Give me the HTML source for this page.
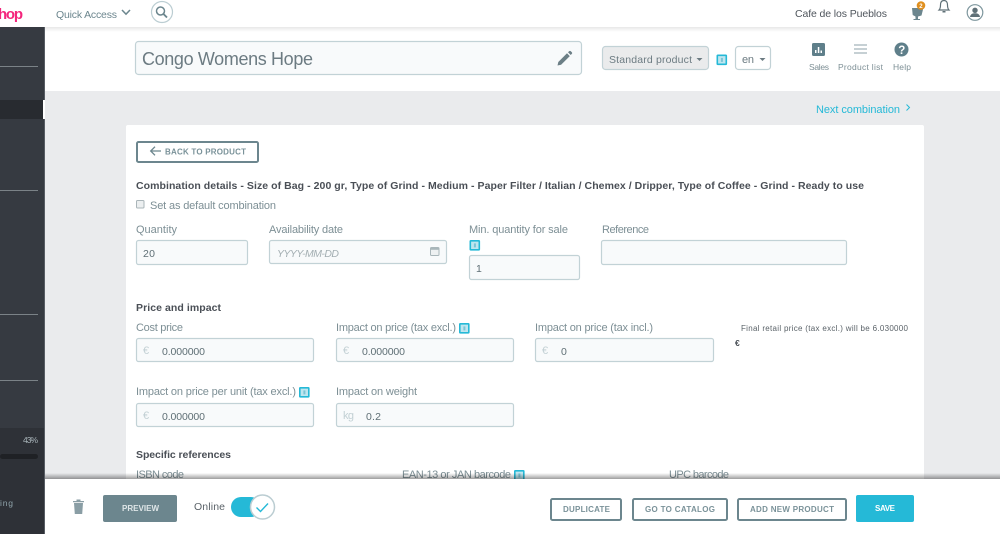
<!DOCTYPE html>
<html lang="en"><head><meta charset="utf-8"><title>Congo Womens Hope</title>
<style>
html,body{margin:0;padding:0;width:1000px;height:534px;overflow:hidden;background:#fff}
svg{display:block;filter:blur(.35px)}
text{font-family:"Liberation Sans",sans-serif;font-size:11px;fill:#7d8f95;white-space:pre}
.b{font-weight:bold;fill:#4a4f56;font-size:10.500px}
.v{fill:#5f6f75;font-size:10.500px}
.c{fill:#25b9d7}
.btn{font-weight:bold;font-size:8px;fill:#7a9299}
.in{fill:#f8fafb;stroke:#c2d2d6;stroke-width:1.200}
.o{fill:#fff;stroke:#6c868e;stroke-width:2}
.pre{fill:#c2d0d4}
</style></head><body>
<svg width="1000" height="534" viewBox="0 0 1000 534" xmlns="http://www.w3.org/2000/svg">
<defs>
<linearGradient id="sh" x1="0" y1="0" x2="0" y2="1"><stop offset="0" stop-color="#000" stop-opacity="0"/><stop offset="1" stop-color="#000" stop-opacity=".38"/></linearGradient>
<linearGradient id="sh2" x1="0" y1="0" x2="0" y2="1"><stop offset="0" stop-color="#000" stop-opacity=".09"/><stop offset="1" stop-color="#000" stop-opacity="0"/></linearGradient>
<g id="h"><rect x=".8" y=".8" width="9" height="9" fill="#bfe6ef" stroke="#25b9d7" stroke-width="1.600" rx=".5"/><rect x="4.400" y="3.400" width="2" height="4" fill="#7cc3d5"/></g>
</defs>

<!-- page backgrounds -->
<rect x="45" y="27" width="955" height="64" fill="#fff"/>
<rect x="45" y="91" width="955" height="388" fill="#eaebed"/>
<rect x="126" y="125" width="798" height="370" rx="2" fill="#fff"/>

<!-- top bar -->
<rect x="0" y="0" width="1000" height="27" fill="#fff"/>
<rect x="45" y="27" width="955" height="5" fill="url(#sh2)"/>
<text x="-2" y="19" textLength="25" style="font-size:15px;font-weight:bold;fill:#f4257c">hop</text>
<text x="56" y="18" textLength="61" style="fill:#6c868e;font-size:10.500px">Quick Access</text>
<path d="M122 10l4 4.200 4-4.200" fill="none" stroke="#6c868e" stroke-width="1.500"/>
<circle cx="162" cy="12" r="10.500" fill="#fff" stroke="#bbcdd2" stroke-width="1.200"/>
<circle cx="160.500" cy="11" r="4" fill="none" stroke="#6c868e" stroke-width="1.500"/>
<path d="M163.500 14l3.500 3.500" stroke="#6c868e" stroke-width="1.900"/>
<text x="795" y="17" textLength="92" style="fill:#4f555c;font-size:10.500px">Cafe de los Pueblos</text>
<!-- notifications -->
<path d="M912 8h7l.8 1.500 3.200 0-1.500 6-3.500 1v2.500h2v1h-6.500v-1h2V16.500l-2.800-1.500z" fill="#6c868e"/>
<circle cx="921" cy="5.500" r="4.300" fill="#e08f1e"/><text x="919.300" y="8" style="font-size:6px;font-weight:bold;fill:#fff">2</text>
<path d="M944 .5c-2.500 0-3.500 2-3.500 4.500 0 2.500-.5 4-1.500 5h10c-1-1-1.500-2.500-1.500-5 0-2.500-1-4.500-3.500-4.500z" fill="#fff" stroke="#5f7077" stroke-width="1.200"/>
<rect x="942.500" y="11" width="3" height="1.500" fill="#5f7077"/>
<circle cx="975" cy="12.500" r="7.800" fill="#fff" stroke="#7d969d" stroke-width="1.200"/>
<circle cx="975" cy="10.300" r="2.700" fill="#5f7077"/><path d="M970 17c.5-3 2.500-3.700 5-3.700s4.500.7 5 3.700z" fill="#5f7077"/>

<!-- sidebar -->
<rect x="0" y="27" width="45" height="507" fill="#363a41"/>
<rect x="44" y="27" width="1" height="507" fill="#585d64"/>
<rect x="0" y="428" width="44" height="106" fill="#2e3137"/>
<rect x="0" y="100" width="43" height="19" fill="#282b30"/>
<rect x="43" y="100" width="2" height="19" fill="#fff"/>
<rect x="0" y="66" width="38" height="1" fill="#7b8287"/>
<rect x="0" y="190" width="38" height="1" fill="#7b8287"/>
<rect x="0" y="314" width="38" height="1" fill="#7b8287"/>
<rect x="0" y="380" width="38" height="1" fill="#7b8287"/>
<text x="23" y="443" textLength="15" style="font-size:8.500px;fill:#a9b5ba">43%</text>
<rect x="0" y="454" width="38" height="5" rx="2.500" fill="#1f2125"/>
<text x="0" y="506" textLength="13" style="font-size:8.500px;fill:#8fa3aa">ing</text>

<!-- header controls -->
<rect x="135.500" y="41.500" width="446" height="33" rx="3" fill="#f8fafb" stroke="#c2d2d6" stroke-width="1.200"/>
<text x="142" y="65" textLength="171" style="font-size:18px;fill:#6c7b82">Congo Womens Hope</text>
<path d="M557.500 65.500l.8-3.500 8.700-8.700 2.800 2.800-8.700 8.700zM568 52.300l1.100-1.100c.5-.5 1.300-.5 1.700 0l1 1c.5.500.5 1.200 0 1.700l-1.100 1.100z" fill="#6c7f86"/>
<rect x="602.500" y="46.500" width="106" height="23" rx="3" fill="#eaebec" stroke="#c2d2d6" stroke-width="1.200"/>
<text x="609" y="63" textLength="83" style="fill:#6c7b82;font-size:10.500px">Standard product</text>
<path d="M696.500 58h6l-3 3z" fill="#6c7b82"/>
<use href="#h" x="716.500" y="54.500"/>
<rect x="735.500" y="46.500" width="35" height="23" rx="3" fill="#fff" stroke="#c2d2d6" stroke-width="1.200"/>
<text x="742" y="63" textLength="12" style="fill:#6c7b82">en</text>
<path d="M759.500 58h6l-3 3z" fill="#6c7b82"/>

<rect x="812" y="43" width="13" height="13" rx="1.500" fill="#5f7f8a"/>
<path d="M815 50h1.500v3H815zM817.800 47h1.500v6h-1.500zM820.500 50.500H822v2.500h-1.500z" fill="#fff"/>
<path d="M854 45h13M854 49h13M854 53h13" stroke="#8ea1a8" stroke-width="1.100"/>
<circle cx="901.500" cy="49.500" r="7" fill="#5f7f8a"/>
<text x="898.300" y="53.800" style="font-size:11.500px;font-weight:bold;fill:#fff">?</text>
<text x="809" y="70" textLength="20" style="font-size:8.500px;fill:#7d8f95">Sales</text>
<text x="838" y="70" textLength="45" style="font-size:8.500px;fill:#7d8f95">Product list</text>
<text x="893" y="70" textLength="18" style="font-size:8.500px;fill:#7d8f95">Help</text>

<!-- next -->
<text x="816" y="113" textLength="84" class="c">Next combination</text>
<path d="M906.500 104.500l3 3-3 3" fill="none" stroke="#25b9d7" stroke-width="1"/>

<!-- back -->
<rect x="137" y="142" width="121" height="20" rx="1.500" class="o"/>
<path d="M161 151h-10M155 146.700l-4.300 4.300 4.300 4.300" fill="none" stroke="#6c868e" stroke-width="1.300"/>
<text x="165" y="154.500" textLength="81" class="btn">BACK TO PRODUCT</text>

<text x="136" y="189" textLength="728" class="b">Combination details - Size of Bag - 200 gr, Type of Grind - Medium - Paper Filter / Italian / Chemex / Dripper, Type of Coffee - Grind - Ready to use</text>
<rect x="136.500" y="200.500" width="7.500" height="7.500" rx="1" fill="#eceff0" stroke="#aab5b9"/>
<text x="150" y="209" textLength="126">Set as default combination</text>

<!-- row 1 -->
<text x="136" y="233" textLength="41">Quantity</text>
<text x="269" y="233" textLength="74">Availability date</text>
<text x="469" y="233" textLength="99">Min. quantity for sale</text>
<text x="602" y="233" textLength="47">Reference</text>
<rect x="136.500" y="240.500" width="111" height="24" rx="2" class="in"/>
<text x="143" y="257" textLength="12" class="v">20</text>
<rect x="269.500" y="240.500" width="177" height="23" rx="2" class="in"/>
<text x="277" y="257" textLength="62" style="font-style:italic;fill:#a3aeb2;font-size:10.500px">YYYY-MM-DD</text>
<rect x="430.500" y="247.500" width="8.500" height="8" rx="1" fill="#eef1f2" stroke="#a9b6ba"/>
<rect x="430.500" y="247.500" width="8.500" height="2.300" fill="#a9b6ba"/>
<use href="#h" x="469.500" y="240"/>
<rect x="469.500" y="255.500" width="110" height="24" rx="2" class="in"/>
<text x="476" y="272" class="v">1</text>
<rect x="601.500" y="240.500" width="245" height="24" rx="2" class="in"/>

<!-- price -->
<text x="136" y="311" textLength="85" class="b">Price and impact</text>
<text x="136" y="331" textLength="47">Cost price</text>
<text x="336" y="331" textLength="120">Impact on price (tax excl.)</text>
<use href="#h" x="459" y="323"/>
<text x="535" y="331" textLength="118">Impact on price (tax incl.)</text>
<text x="741" y="331" textLength="167" style="font-size:8px;fill:#5a6268">Final retail price (tax excl.) will be 6.030000</text>
<text x="735" y="346" style="font-size:8.500px;font-weight:bold;fill:#4a4f56">€</text>
<rect x="136.500" y="338.500" width="177" height="23" rx="2" class="in"/>
<rect x="336.500" y="338.500" width="177" height="23" rx="2" class="in"/>
<rect x="535.500" y="338.500" width="178" height="23" rx="2" class="in"/>
<text x="143" y="354" class="pre">€</text><text x="162" y="355" textLength="43" class="v">0.000000</text>
<text x="343" y="354" class="pre">€</text><text x="362" y="355" textLength="43" class="v">0.000000</text>
<text x="542" y="354" class="pre">€</text><text x="561" y="355" class="v">0</text>

<text x="136" y="395" textLength="160">Impact on price per unit (tax excl.)</text>
<use href="#h" x="299" y="387"/>
<text x="336" y="395" textLength="81">Impact on weight</text>
<rect x="136.500" y="403.500" width="177" height="23" rx="2" class="in"/>
<rect x="336.500" y="403.500" width="177" height="23" rx="2" class="in"/>
<text x="143" y="419" class="pre">€</text><text x="162" y="420" textLength="43" class="v">0.000000</text>
<text x="343" y="419" textLength="11" class="pre">kg</text><text x="366" y="420" textLength="15" class="v">0.2</text>

<text x="136" y="458" textLength="95" class="b">Specific references</text>
<text x="136" y="478" textLength="48">ISBN code</text>
<text x="402" y="478" textLength="109">EAN-13 or JAN barcode</text>
<use href="#h" x="514" y="470"/>
<text x="669" y="478" textLength="60">UPC barcode</text>

<!-- bottom bar -->
<rect x="45" y="473" width="955" height="6" fill="url(#sh)"/>
<rect x="45" y="479" width="955" height="55" fill="#fff"/>
<path d="M73 501h11v1.300H73zM76.500 499.500h4v1.500h-4zM74 503h9l-.8 11h-7.400z" fill="#8a9ea5"/>
<rect x="103" y="495" width="74" height="27" rx="2" fill="#6c868e"/>
<text x="122" y="511" textLength="37" style="font-size:8px;font-weight:bold;fill:#dfe6e8">PREVIEW</text>
<text x="194" y="510" textLength="31" style="fill:#5a6268;font-size:10.500px">Online</text>
<rect x="231" y="497" width="30" height="20" rx="10" fill="#25b9d7"/>
<circle cx="262.500" cy="507" r="12" fill="#fff" stroke="#bbcdd2" stroke-width="1.500"/>
<path d="M256.500 507.500l4 4 7.500-8" fill="none" stroke="#25b9d7" stroke-width="1.400"/>

<rect x="551" y="499" width="70" height="21" rx="1.500" class="o"/>
<text x="563" y="512" textLength="47" class="btn">DUPLICATE</text>
<rect x="633" y="499" width="94" height="21" rx="1.500" class="o"/>
<text x="645" y="512" textLength="70" class="btn">GO TO CATALOG</text>
<rect x="738" y="499" width="108" height="21" rx="1.500" class="o"/>
<text x="750" y="512" textLength="84" class="btn">ADD NEW PRODUCT</text>
<rect x="856" y="495" width="58" height="27" rx="2" fill="#25b9d7"/>
<text x="875" y="511" textLength="20" style="font-size:8px;font-weight:bold;fill:#fff">SAVE</text>
</svg>
</body></html>
